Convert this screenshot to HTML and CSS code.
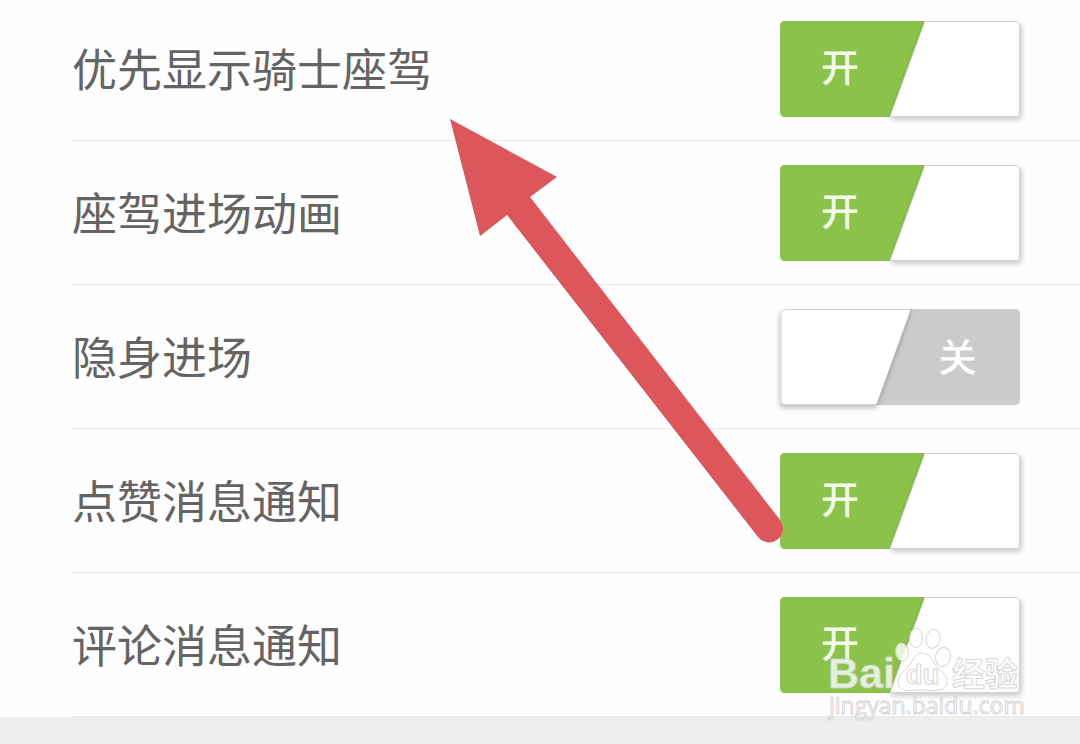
FILE: index.html
```html
<!DOCTYPE html>
<html lang="zh-CN">
<head>
<meta charset="utf-8">
<meta name="viewport" content="width=device-width, initial-scale=1">
<title>座驾设置</title>
<link rel="stylesheet" href="styles.css">
</head>
<body>
<svg class="defs" width="0" height="0" aria-hidden="true">
  <defs>
    <filter id="knob-shadow" x="-20%" y="-20%" width="140%" height="140%">
      <feDropShadow dx="2" dy="3" stdDeviation="2.5" flood-color="#000" flood-opacity=".2"/>
    </filter>
    <filter id="knob-shadow-off" x="-20%" y="-20%" width="140%" height="140%">
      <feDropShadow dx="-1" dy="3" stdDeviation="2.5" flood-color="#000" flood-opacity=".25"/>
    </filter>
    <g id="switch-on">
      <path d="M5 0H146L112 96H5Q0 96 0 91V5Q0 0 5 0Z" fill="#8bc34a"/>
      <path d="M144 .5H235Q239.500 .5 239.500 5V91Q239.500 95.500 235 95.500H109Z" fill="#fff" stroke="#d2d2d2" filter="url(#knob-shadow)"/>
      <path d="M144 0L109 96" fill="none" stroke="#7da652" stroke-opacity=".7" stroke-width="2"/>
    </g>
    <g id="switch-off">
      <path d="M126 0H235Q240 0 240 5V91Q240 96 235 96H92Z" fill="#cbcbcb"/>
      <path d="M131 .5H6Q1 .5 1 5V91Q1 95.500 6 95.500H97Z" fill="#fff" stroke="#d2d2d2" filter="url(#knob-shadow-off)"/>
      <path d="M132 0L97 96" fill="none" stroke="#b4b4b4" stroke-width="1.500"/>
    </g>
  </defs>
</svg>
<main class="page">
  <ul class="settings">
    <li class="row">
      <label class="row-label" for="knight">优先显示骑士座驾</label>
      <span class="switch">
        <input class="switch-input" type="checkbox" id="knight" checked>
        <svg class="switch-art art-on" viewBox="0 0 240 96" aria-hidden="true"><use href="#switch-on"/></svg>
        <svg class="switch-art art-off" viewBox="0 0 240 96" aria-hidden="true"><use href="#switch-off"/></svg>
        <span class="state state-on">开</span><span class="state state-off">关</span>
      </span>
    </li>
    <li class="row">
      <label class="row-label" for="animation">座驾进场动画</label>
      <span class="switch">
        <input class="switch-input" type="checkbox" id="animation" checked>
        <svg class="switch-art art-on" viewBox="0 0 240 96" aria-hidden="true"><use href="#switch-on"/></svg>
        <svg class="switch-art art-off" viewBox="0 0 240 96" aria-hidden="true"><use href="#switch-off"/></svg>
        <span class="state state-on">开</span><span class="state state-off">关</span>
      </span>
    </li>
    <li class="row">
      <label class="row-label" for="invisible">隐身进场</label>
      <span class="switch">
        <input class="switch-input" type="checkbox" id="invisible">
        <svg class="switch-art art-on" viewBox="0 0 240 96" aria-hidden="true"><use href="#switch-on"/></svg>
        <svg class="switch-art art-off" viewBox="0 0 240 96" aria-hidden="true"><use href="#switch-off"/></svg>
        <span class="state state-on">开</span><span class="state state-off">关</span>
      </span>
    </li>
    <li class="row">
      <label class="row-label" for="likes">点赞消息通知</label>
      <span class="switch">
        <input class="switch-input" type="checkbox" id="likes" checked>
        <svg class="switch-art art-on" viewBox="0 0 240 96" aria-hidden="true"><use href="#switch-on"/></svg>
        <svg class="switch-art art-off" viewBox="0 0 240 96" aria-hidden="true"><use href="#switch-off"/></svg>
        <span class="state state-on">开</span><span class="state state-off">关</span>
      </span>
    </li>
    <li class="row">
      <label class="row-label" for="comments">评论消息通知</label>
      <span class="switch">
        <input class="switch-input" type="checkbox" id="comments" checked>
        <svg class="switch-art art-on" viewBox="0 0 240 96" aria-hidden="true"><use href="#switch-on"/></svg>
        <svg class="switch-art art-off" viewBox="0 0 240 96" aria-hidden="true"><use href="#switch-off"/></svg>
        <span class="state state-on">开</span><span class="state state-off">关</span>
      </span>
    </li>
  </ul>

  <svg class="arrow" viewBox="0 0 336 426" aria-hidden="true">
    <path d="M1 0L108 58L81 78L331 401A13.500 13.500 0 0 1 309 418L58 96L31 117Z" fill="#dc565c"/>
  </svg>

  <svg class="watermark" viewBox="0 0 200 96" role="img" aria-label="Baidu 经验">
    <g class="mark">
      <text class="mark-bai" x="2" y="65">Bai</text>
      <ellipse cx="76" cy="29" rx="6.500" ry="9" transform="rotate(-8 76 29)"/>
      <ellipse cx="90" cy="15" rx="6.500" ry="9.500"/>
      <ellipse cx="107" cy="16" rx="7" ry="9.500" transform="rotate(10 107 16)"/>
      <ellipse cx="117" cy="34" rx="7.500" ry="9.500" transform="rotate(12 117 34)"/>
      <path d="M96 30C105 30 106 39 112 45C118 50 122 55 121 60C119 70 109 67 97 67C85 67 75 70 72 61C71 55 76 49 82 44C87 39 88 30 96 30Z"/>
      <text class="mark-du" x="80" y="61">du</text>
      <text class="mark-cjk" x="126" y="63">经验</text>
      <text class="mark-url" x="3" y="91">jingyan.baidu.com</text>
    </g>
  </svg>
</main>
</body>
</html>
```
FILE: styles.css
```css
* {
  box-sizing: border-box;
}

body {
  margin: 0;
  min-height: 100vh;
  overflow: hidden;
  background: #eee;
  color: #646464;
  font-family: "Liberation Sans", "Noto Sans CJK SC", sans-serif;
}

.defs {
  position: absolute;
}

.page {
  position: relative;
}

/* The list is scrolled slightly past its top edge. */
.settings {
  margin: -3px 0 0;
  padding: 0 0 0 72px;
  list-style: none;
  background: #fefefe;
}

.row {
  display: flex;
  align-items: center;
  justify-content: space-between;
  height: 144px;
  padding-right: 60px;
  border-bottom: 1px solid #e9e9e9;
}

.row-label {
  padding-bottom: 2px;
  font-family: "Noto Sans CJK SC", sans-serif;
  font-size: 45px;
  line-height: 64px;
}

.switch {
  position: relative;
  flex: none;
  width: 240px;
  height: 96px;
}

.switch-input {
  appearance: none;
  display: block;
  width: 100%;
  height: 100%;
  margin: 0;
  cursor: pointer;
}

.switch-art {
  position: absolute;
  inset: 0;
  overflow: visible;
  pointer-events: none;
}

.state {
  position: absolute;
  top: 0;
  color: #fff;
  font-family: "Noto Sans CJK SC", sans-serif;
  font-size: 38px;
  font-weight: 500;
  line-height: 88px;
  text-align: center;
  pointer-events: none;
}

.state-on {
  left: 0;
  width: 50%;
  color: #f4fbe9;
}

.state-off {
  right: 0;
  width: 52%;
  line-height: 92px;
}

.switch-input:checked ~ .art-off,
.switch-input:checked ~ .state-off,
.switch-input:not(:checked) ~ .art-on,
.switch-input:not(:checked) ~ .state-on {
  display: none;
}

.arrow {
  position: absolute;
  top: 122px;
  left: 449px;
  width: 336px;
  height: 426px;
  pointer-events: none;
}

.watermark {
  position: absolute;
  right: 54px;
  bottom: -2px;
  width: 200px;
  height: 96px;
  overflow: visible;
  pointer-events: none;
}

.mark {
  fill: #fff;
  fill-opacity: .8;
  stroke: #ccc;
  stroke-opacity: .8;
  stroke-width: 1;
}

.mark-bai,
.mark-du {
  font-family: "Liberation Sans", sans-serif;
  font-weight: 700;
}

.mark-bai {
  font-size: 43px;
}

.mark-du {
  font-size: 27px;
}

.mark-cjk {
  font-family: "Noto Sans CJK SC", sans-serif;
  font-size: 33px;
  font-weight: 700;
}

.mark-url {
  font-family: "Open Sans", sans-serif;
  font-size: 23px;
}
```
